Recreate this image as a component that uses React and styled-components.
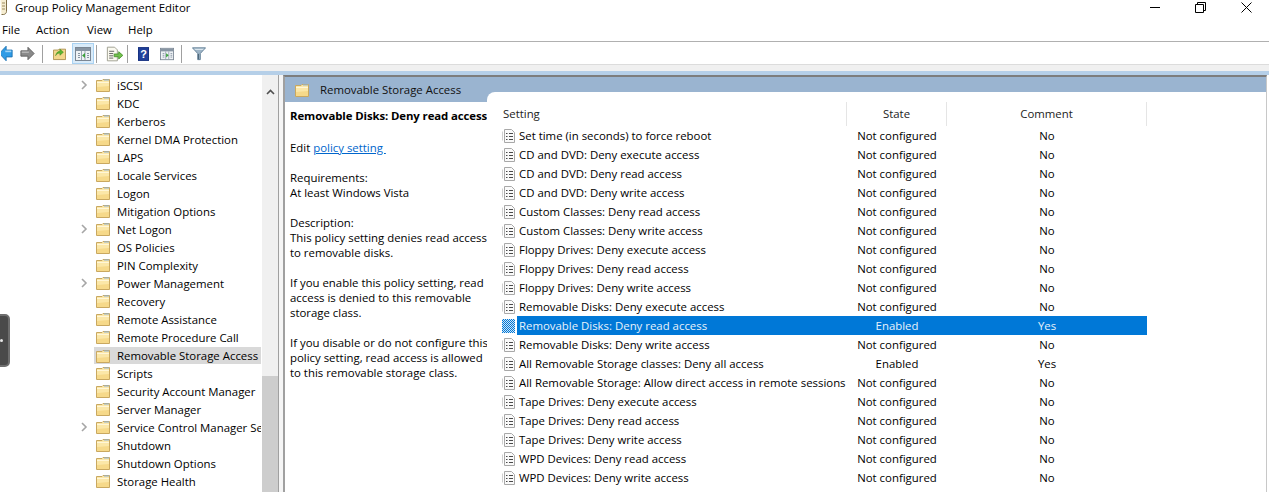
import styled, { createGlobalStyle } from 'styled-components';

const GlobalStyle = createGlobalStyle`
  html, body { margin: 0; padding: 0; background: #fff; }
  body {
    font-family: "Open Sans", "Noto Sans", "Liberation Sans", sans-serif;
    font-size: 11.4px;
    color: #000;
    overflow: hidden;
  }
`;

const Page = styled.div`
  position: relative;
  width: 1269px;
  height: 492px;
  overflow: hidden;
  display: flex;
  flex-direction: column;
`;

const TitleBar = styled.div`
  height: 15px;
  display: flex;
  align-items: center;
  justify-content: space-between;
`;

const AppTitle = styled.div`
  display: flex;
  align-items: center;
  gap: 7px;
  line-height: 15px;
`;

const WindowButtons = styled.div`
  display: flex;
  align-items: center;
  gap: 35px;
  padding-right: 17px;
`;

const MenuBar = styled.nav`
  height: 27px;
  box-sizing: border-box;
  border-bottom: 1px solid #b0b0b0;
  display: grid;
  grid-template-columns: 34px 51px 41px auto;
  align-items: center;
  padding: 3px 0 0 2px;
`;

const MenuItem = styled.span`
  line-height: 15px;
`;

const Toolbar = styled.div`
  height: 23px;
  box-sizing: border-box;
  padding-top: 1px;
  border-bottom: 1px solid #dcdcdc;
  display: flex;
  align-items: center;
`;

const ToolSep = styled.span`
  width: 1px;
  height: 18px;
  background: #a0a0a0;
  margin-left: ${(p) => p.$left || 0}px;
`;

const ToolButton = styled.span`
  display: flex;
  align-items: center;
  justify-content: center;
  box-sizing: border-box;
  width: ${(p) => p.$width}px;
  height: 21px;
  margin-left: ${(p) => p.$left || 0}px;
  background: ${(p) => (p.$active ? '#d9ebf9' : 'transparent')};
  border: 1px solid ${(p) => (p.$active ? '#a9d2f2' : 'transparent')};
`;

const GreyStrip = styled.div`
  height: 6px;
  background: #f0f0f0;
`;

const BlueStrip = styled.div`
  height: 4px;
  background: #b5cfe8;
`;

const Body = styled.div`
  flex: 1;
  min-height: 0;
  display: flex;
  background: #fff;
`;

const TreePane = styled.div`
  width: 262px;
  flex: none;
  box-sizing: border-box;
  padding: 1px 1px 0 0;
  overflow: hidden;
`;

const TreeRow = styled.div`
  height: 18px;
  display: flex;
  align-items: center;
  padding-left: 81px;
  white-space: nowrap;
  overflow: hidden;
`;

const Chevron = styled.span`
  width: 13px;
  flex: none;
  display: flex;
`;

const TreeItem = styled.span`
  display: flex;
  align-items: center;
  flex: 1;
  min-width: 0;
  gap: 7px;
  height: 17px;
  padding-left: 2px;
  margin-top: ${(p) => (p.$selected ? '1px' : '0')};
  background: ${(p) => (p.$selected ? '#d9d9d9' : 'transparent')};
  overflow: hidden;
`;

const Scrollbar = styled.div`
  width: 16px;
  flex: none;
  background: #f0f0f0;
  display: flex;
  flex-direction: column;
  align-items: center;
`;

const ScrollUp = styled.div`
  height: 17px;
  padding-top: 8px;
  box-sizing: border-box;
  margin-bottom: 284px;
`;

const ScrollThumb = styled.div`
  flex: 1;
  align-self: stretch;
  background: #cdcdcd;
`;

const PaneGap = styled.div`
  width: 5px;
  flex: none;
  box-sizing: border-box;
  background: #f5f5f5;
  border-left: 1px solid #a0a0a0;
`;

const DetailPane = styled.div`
  width: 984px;
  flex: none;
  box-sizing: border-box;
  border-left: 2px solid #a0a0a0;
  border-top: 2px solid #7d7d7d;
  border-right: 1px solid #c8c8c8;
  display: flex;
  flex-direction: column;
  min-height: 0;
`;

const DetailHeader = styled.div`
  height: 25px;
  flex: none;
  background: #9ab4d0;
  display: flex;
  align-items: center;
  gap: 11px;
  padding-left: 10px;
  line-height: 15px;
  color: #111;
`;

const DetailBody = styled.div`
  flex: 1;
  min-height: 0;
  display: flex;
`;

const Description = styled.div`
  width: 202px;
  flex: none;
  box-sizing: border-box;
  padding: 6px 0 0 5px;
  line-height: 15px;
  white-space: nowrap;
`;

const DescTitle = styled.div`
  font-weight: 700;
  letter-spacing: -0.1px;
  margin-bottom: 17px;
`;

const Para = styled.p`
  margin: 0 0 15px;
  white-space: pre;
`;

const PolicyLink = styled.span`
  color: #0066cc;
  text-decoration: underline;
`;

/* white sheet with the rounded corner that bites into the blue header */
const SettingsPane = styled.div`
  flex: 1;
  min-width: 0;
  margin-top: -10px;
  padding: 10px 0 0 11px;
  background: #fff;
  border-top-left-radius: 8px;
  position: relative;
`;

const TableHead = styled.div`
  display: grid;
  grid-template-columns: 349px 100px 200px;
  height: 24px;
`;

const HeadCell = styled.div`
  box-sizing: border-box;
  border-right: 1px solid #e5e5e5;
  display: flex;
  align-items: center;
  justify-content: ${(p) => (p.$center ? 'center' : 'flex-start')};
  padding: 0 0 2px ${(p) => (p.$center ? '0' : '5px')};
  line-height: 15px;
  color: #222;
`;

const TableRow = styled.div`
  display: grid;
  grid-template-columns: 349px 100px 200px;
  height: 19px;
  align-items: center;
`;

const NameCell = styled.div`
  display: flex;
  align-items: center;
  height: 19px;
  padding-left: 4px;
  gap: 2px;
  white-space: nowrap;
  overflow: hidden;
`;

const RowText = styled.span`
  flex: 1;
  height: 19px;
  line-height: 19px;
  padding-left: 2px;
  ${(p) => p.$selected && 'background: #0078d7; color: #e8f2fb;'}
`;

const ValueCell = styled.div`
  height: 19px;
  line-height: 19px;
  text-align: center;
  ${(p) => p.$selected && 'background: #0078d7; color: #e8f2fb;'}
`;

const SideHandle = styled.div`
  position: absolute;
  left: -10px;
  top: 314px;
  width: 20px;
  height: 53px;
  border-radius: 5px;
  background: #4a4a4a;
  border: 2px solid #6e6e6e;
  box-sizing: border-box;
  display: flex;
  align-items: center;
  justify-content: flex-end;
  padding-right: 5px;
`;

const HandleDot = styled.span`
  width: 3px;
  height: 3px;
  background: #e8e8e8;
  border-radius: 50%;
`;

const treeItems = [
  ['iSCSI', true],
  ['KDC'],
  ['Kerberos'],
  ['Kernel DMA Protection'],
  ['LAPS'],
  ['Locale Services'],
  ['Logon'],
  ['Mitigation Options'],
  ['Net Logon', true],
  ['OS Policies'],
  ['PIN Complexity'],
  ['Power Management', true],
  ['Recovery'],
  ['Remote Assistance'],
  ['Remote Procedure Call'],
  ['Removable Storage Access', false, true],
  ['Scripts'],
  ['Security Account Manager'],
  ['Server Manager'],
  ['Service Control Manager Settings', true],
  ['Shutdown'],
  ['Shutdown Options'],
  ['Storage Health'],
];

const settings = [
  ['Set time (in seconds) to force reboot', 'Not configured', 'No'],
  ['CD and DVD: Deny execute access', 'Not configured', 'No'],
  ['CD and DVD: Deny read access', 'Not configured', 'No'],
  ['CD and DVD: Deny write access', 'Not configured', 'No'],
  ['Custom Classes: Deny read access', 'Not configured', 'No'],
  ['Custom Classes: Deny write access', 'Not configured', 'No'],
  ['Floppy Drives: Deny execute access', 'Not configured', 'No'],
  ['Floppy Drives: Deny read access', 'Not configured', 'No'],
  ['Floppy Drives: Deny write access', 'Not configured', 'No'],
  ['Removable Disks: Deny execute access', 'Not configured', 'No'],
  ['Removable Disks: Deny read access', 'Enabled', 'Yes', true],
  ['Removable Disks: Deny write access', 'Not configured', 'No'],
  ['All Removable Storage classes: Deny all access', 'Enabled', 'Yes'],
  ['All Removable Storage: Allow direct access in remote sessions', 'Not configured', 'No'],
  ['Tape Drives: Deny execute access', 'Not configured', 'No'],
  ['Tape Drives: Deny read access', 'Not configured', 'No'],
  ['Tape Drives: Deny write access', 'Not configured', 'No'],
  ['WPD Devices: Deny read access', 'Not configured', 'No'],
  ['WPD Devices: Deny write access', 'Not configured', 'No'],
];

function FolderIcon() {
  return (
    <svg width="14" height="14" viewBox="0 0 14 14" style={{ flex: 'none' }}>
      <path d="M.5 2.500V13.500H13.500V1.500H7L6 2.500Z" fill="#fbe7a8" stroke="#c9a860" />
      <path d="M1 4.500H13" stroke="#fff6d8" />
      <path d="M8 2H13" stroke="#8fb4d8" />
      <path d="M1 13H13V8L1 9Z" fill="#f6d98a" />
    </svg>
  );
}

function ChevronIcon() {
  return (
    <svg width="7" height="10" viewBox="0 0 7 10">
      <path d="M1 1l4 4-4 4" fill="none" stroke="#a6a6a6" strokeWidth="1.6" />
    </svg>
  );
}

function PolicyIcon({ selected }) {
  if (selected) {
    return (
      <svg width="13" height="14" viewBox="0 0 13 14" style={{ flex: 'none' }}>
        <defs>
          <pattern id="dither" width="2" height="2" patternUnits="userSpaceOnUse">
            <rect width="2" height="2" fill="#0078d7" />
            <rect width="1" height="1" fill="#cfe4f6" />
            <rect x="1" y="1" width="1" height="1" fill="#cfe4f6" />
          </pattern>
        </defs>
        <rect width="13" height="14" fill="url(#dither)" />
      </svg>
    );
  }
  return (
    <svg width="13" height="14" viewBox="0 0 13 14" style={{ flex: 'none' }}>
      <path d="M2.500.5H9.500L12.500 3.500V13.500H2.500Z" fill="#fafafa" stroke="#a8a8a8" />
      <path d="M.5 2.500V11.500" stroke="#d0d0d0" />
      <path d="M4 4.500H5.500M7 4.500H11M4 7.500H5.500M7 7.500H11M4 10.500H5.500M7 10.500H11" stroke="#4a4a4a" />
    </svg>
  );
}

function BackIcon() {
  return (
    <svg width="14" height="15" viewBox="0 0 14 15">
      <path d="M6-1V3.500H13V11.500H6V16L-2 7.500Z" fill="#2e9be6" stroke="#1b6fb0" />
      <path d="M5 5H12" stroke="#9ed4f7" strokeWidth="2" />
    </svg>
  );
}

function ForwardIcon() {
  return (
    <svg width="17" height="15" viewBox="0 0 17 15">
      <path d="M9 .5L16 7.500L9 14.500V10.500H1V4.500H9Z" fill="#8a8a8a" stroke="#5c5c5c" />
      <path d="M2 6H10" stroke="#bdbdbd" strokeWidth="1.500" />
    </svg>
  );
}

function FolderUpIcon() {
  return (
    <svg width="15" height="15" viewBox="0 0 15 15">
      <path d="M.5 3.500V14.500H14.500V2.500H7L6 3.500Z" fill="#f3d68c" stroke="#a98b48" />
      <path d="M3 10C4 6 6 5 8 5V2.500L12 6L8 9.500V7C6 7 4 8 3 10Z" fill="#5cb531" stroke="#3b8a1c" strokeWidth=".6" />
    </svg>
  );
}

function PanelIcon({ arrowRight }) {
  return (
    <svg width="16" height="14" viewBox="0 0 16 14">
      <rect x=".5" y=".5" width="15" height="13" fill="#eef2f5" stroke="#7b8794" />
      <rect x="1" y="1" width="14" height="3" fill="#8795a3" />
      <path d="M6.500 4V13M10 4V13" stroke="#9aa6b2" />
      <path d="M3 6.500H5M3 8.500H5M3 10.500H5M12 6.500H14M12 8.500H14M12 10.500H14" stroke="#8795a3" />
      <path d={arrowRight ? 'M7 6L10 8.500L7 11Z' : 'M10 6L7 8.500L10 11Z'} fill="#3aa03a" />
    </svg>
  );
}

function ExportIcon() {
  return (
    <svg width="22" height="16" viewBox="0 0 22 16">
      <path d="M1.500.5H9.500L12.500 3.500V15.500H1.500Z" fill="#fbfaf0" stroke="#9b9b8c" />
      <path d="M3.500 5H9M3.500 7.500H8M3.500 10H8M3.500 12.500H8" stroke="#555" />
      <path d="M9 8H14V5.500L18.500 9.500L14 13.500V11H9Z" fill="#72c24c" stroke="#4b9430" />
    </svg>
  );
}

function HelpIcon() {
  return (
    <svg width="13" height="16" viewBox="0 0 13 16">
      <rect width="13" height="16" fill="#22409a" />
      <rect x=".5" y=".5" width="12" height="15" fill="none" stroke="#16307e" />
      <text x="6.500" y="13" textAnchor="middle" fill="#fff" fontSize="13" fontWeight="700" fontFamily="Liberation Sans, sans-serif">?</text>
    </svg>
  );
}

function FilterIcon() {
  return (
    <svg width="16" height="15" viewBox="0 0 16 15">
      <path d="M.5 1H15.500L9.500 7.500V14.500H6.500V7.500Z" fill="#9db4c6" stroke="#5e7c94" />
      <path d="M2 2H14L12 3.500H4Z" fill="#dbe6ee" />
      <path d="M7.500 8V14" stroke="#41596c" />
    </svg>
  );
}

function ScrollIcon() {
  return (
    <svg width="8" height="15" viewBox="0 0 8 15">
      <path d="M.5 -1H6.500V11.500C6.500 13 5 14.500 3.500 14.500H1.500" fill="#f5ecd0" stroke="#7d6c44" />
      <path d="M2 3H5M2 6H5M2 9H5" stroke="#9c8a5e" />
    </svg>
  );
}

export default function App() {
  return (
    <Page>
      <GlobalStyle />
      <TitleBar>
        <AppTitle>
          <ScrollIcon />
          <span>Group Policy Management Editor</span>
        </AppTitle>
        <WindowButtons>
          <svg width="10" height="1" viewBox="0 0 10 1">
            <path d="M0 .5H10" stroke="#000" />
          </svg>
          <svg width="11" height="11" viewBox="0 0 11 11">
            <path d="M.5 2.500H8.500V10.500H.5ZM2.500 2.500V.5H10.500V8.500H8.500" fill="none" stroke="#000" />
          </svg>
          <svg width="11" height="11" viewBox="0 0 11 11">
            <path d="M.5 .5L10.500 10.500M10.500 .5L.5 10.500" fill="none" stroke="#000" />
          </svg>
        </WindowButtons>
      </TitleBar>
      <MenuBar>
        <MenuItem>File</MenuItem>
        <MenuItem>Action</MenuItem>
        <MenuItem>View</MenuItem>
        <MenuItem>Help</MenuItem>
      </MenuBar>
      <Toolbar>
        <ToolButton $width={14}><BackIcon /></ToolButton>
        <ToolButton $width={17} $left={5}><ForwardIcon /></ToolButton>
        <ToolSep $left={6} />
        <ToolButton $width={15} $left={9}><FolderUpIcon /></ToolButton>
        <ToolButton $width={22} $left={5} $active><PanelIcon /></ToolButton>
        <ToolSep $left={2} />
        <ToolButton $width={22} $left={8}><ExportIcon /></ToolButton>
        <ToolSep />
        <ToolButton $width={13} $left={9}><HelpIcon /></ToolButton>
        <ToolButton $width={16} $left={9}><PanelIcon arrowRight /></ToolButton>
        <ToolSep $left={6} />
        <ToolButton $width={16} $left={9}><FilterIcon /></ToolButton>
      </Toolbar>
      <GreyStrip />
      <BlueStrip />
      <Body>
        <TreePane>
          {treeItems.map(([name, expandable, selected]) => (
            <TreeRow key={name}>
              <Chevron>{expandable ? <ChevronIcon /> : null}</Chevron>
              <TreeItem $selected={selected}>
                <FolderIcon />
                <span>{name}</span>
              </TreeItem>
            </TreeRow>
          ))}
        </TreePane>
        <Scrollbar>
          <ScrollUp>
            <svg width="9" height="6" viewBox="0 0 9 6">
              <path d="M1 5l3.500-3.500L8 5" fill="none" stroke="#505050" strokeWidth="1.600" />
            </svg>
          </ScrollUp>
          <ScrollThumb />
        </Scrollbar>
        <PaneGap />
        <DetailPane>
          <DetailHeader>
            <FolderIcon />
            <span>Removable Storage Access</span>
          </DetailHeader>
          <DetailBody>
            <Description>
              <DescTitle>Removable Disks: Deny read access</DescTitle>
              <Para>Edit <PolicyLink>policy setting </PolicyLink></Para>
              <Para>Requirements:<br />At least Windows Vista</Para>
              <Para>Description:<br />This policy setting denies read access<br />to removable disks.</Para>
              <Para>If you enable this policy setting, read<br />access is denied to this removable<br />storage class.</Para>
              <Para>If you disable or do not configure this<br />policy setting, read access is allowed<br />to this removable storage class.</Para>
            </Description>
            <SettingsPane>
              <TableHead>
                <HeadCell>Setting</HeadCell>
                <HeadCell $center>State</HeadCell>
                <HeadCell $center>Comment</HeadCell>
              </TableHead>
              {settings.map(([name, state, comment, selected]) => (
                <TableRow key={name}>
                  <NameCell>
                    <PolicyIcon selected={selected} />
                    <RowText $selected={selected}>{name}</RowText>
                  </NameCell>
                  <ValueCell $selected={selected}>{state}</ValueCell>
                  <ValueCell $selected={selected}>{comment}</ValueCell>
                </TableRow>
              ))}
            </SettingsPane>
          </DetailBody>
        </DetailPane>
      </Body>
      <SideHandle><HandleDot /></SideHandle>
    </Page>
  );
}
